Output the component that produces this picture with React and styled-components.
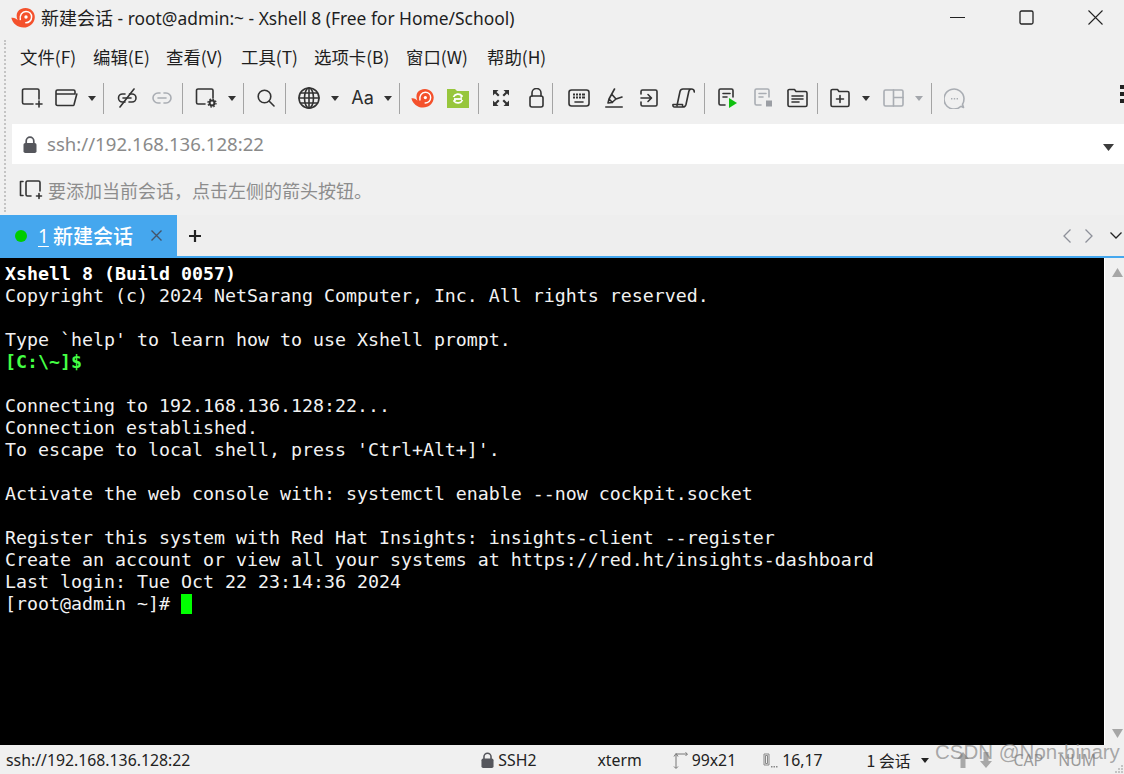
import React from "react";
import styled, { createGlobalStyle } from "styled-components";

const UI = `"Noto Sans", "Noto Sans CJK SC", sans-serif`;
const CJK = `"Noto Sans CJK SC", "Noto Sans", sans-serif`;

const Global = createGlobalStyle`
  html, body { margin: 0; padding: 0; background: #f0f0f0; overflow: hidden; }
  * { box-sizing: border-box; }
`;

const Window = styled.div`
  position: relative;
  width: 1124px;
  height: 774px;
  display: flex;
  flex-direction: column;
  background: #f0f0f0;
  font-family: ${UI};
  overflow: hidden;
`;

const TitleBar = styled.div`
  height: 40px;
  flex: none;
  display: flex;
  align-items: flex-start;
  padding: 8px 21px 0 11px;
`;
const TitleText = styled.div`
  margin-left: 6px;
  margin-top: -2px;
  font-size: 17.4px;
  line-height: 22px;
  color: #1e1e1e;
  white-space: nowrap;
  span { font-family: ${CJK}; font-size: 18px; }
`;
const WinButtons = styled.div`
  margin-left: auto;
  display: flex;
  gap: 54px;
  padding-top: 2px;
`;

const Bands = styled.div`
  flex: none;
  display: flex;
`;
const Grip = styled.div`
  width: 2px;
  margin: 0 6px 3px 4px;
  border-left: 2px dotted #c4c4c4;
`;
const BandStack = styled.div`
  flex: 1;
  min-width: 0;
  display: flex;
  flex-direction: column;
`;

const MenuBar = styled.div`
  height: 36px;
  display: flex;
  align-items: center;
  padding: 0 0 4px 8px;
`;
const MenuItem = styled.div`
  width: ${p => p.$w}px;
  flex: none;
  font-family: ${CJK};
  font-size: 17.4px;
  color: #1e1e1e;
  white-space: nowrap;
`;

const ToolBar = styled.div`
  height: 44px;
  display: flex;
  align-items: center;
`;
const Tool = styled.div`
  flex: none;
  width: ${p => p.$w}px;
  margin-left: ${p => p.$gap}px;
  display: flex;
  align-items: center;
  justify-content: center;
  svg { display: block; flex: none; }
`;
const Sep = styled.div`
  flex: none;
  width: 1px;
  height: 31px;
  margin-left: ${p => p.$gap}px;
  background: #a4a4a4;
`;
const AaLabel = styled.div`
  font-family: "Inter", sans-serif;
  font-size: 18px;
  line-height: 20px;
  color: #2c2c2c;
`;
const Dots = styled.div`
  margin-left: auto;
  width: 4px;
  margin-top: -8px;
  display: flex;
  flex-direction: column;
  gap: 3px;
  i { display: block; width: 4px; height: 4px; background: #222; }
`;

const AddressBar = styled.div`
  margin-top: 4px;
  height: 40px;
  background: #fff;
  display: flex;
  align-items: center;
  padding: 0 10px 0 11px;
`;
const AddressText = styled.div`
  margin: -2px 0 0 10px;
  font-size: 18.6px;
  color: #8a8a8a;
  white-space: nowrap;
`;
const AddressCaret = styled.div`
  margin-left: auto;
  margin-top: 2px;
`;

const LinkBar = styled.div`
  height: 51px;
  display: flex;
  align-items: center;
  padding-left: 7px;
`;
const LinkText = styled.div`
  margin-left: 5px;
  font-family: ${CJK};
  font-size: 18px;
  color: #8d8d8d;
  white-space: nowrap;
`;

const TabBar = styled.div`
  flex: none;
  height: 43px;
  display: flex;
  background: #eeeeee;
  border-bottom: 2px solid #45a7ee;
`;
const Tab = styled.div`
  width: 177px;
  background: #45a7ee;
  display: flex;
  align-items: center;
  padding-left: 15px;
  color: #fff;
`;
const Led = styled.div`
  width: 12px;
  height: 12px;
  border-radius: 50%;
  background: #00cc00;
`;
const TabNum = styled.span`
  margin-left: 11px;
  width: 10px;
  font-size: 19px;
  line-height: 24px;
  text-decoration: underline;
  text-underline-offset: 3px;
`;
const TabName = styled.span`
  margin-left: 5px;
  font-family: ${CJK};
  font-size: 20px;
  font-weight: 500;
  line-height: 24px;
  white-space: nowrap;
`;
const TabClose = styled.div`
  margin-left: 18px;
  display: flex;
`;
const TabAdd = styled.div`
  margin-left: 12px;
  align-self: center;
  display: flex;
`;
const TabNav = styled.div`
  margin-left: auto;
  align-self: center;
  display: flex;
  align-items: center;
  padding-right: 2px;
  gap: 14px;
`;
const TabMenu = styled.div`
  margin-left: 3px;
  display: flex;
`;

const Middle = styled.div`
  flex: 1;
  min-height: 0;
  display: flex;
`;
const Terminal = styled.pre`
  flex: 1;
  margin: 0;
  padding: 5px 0 0 5px;
  background: #000;
  color: #f2f2f2;
  font-family: "DejaVu Sans Mono", monospace;
  font-size: 18.27px;
  line-height: 22px;
  overflow: hidden;
`;
const Bold = styled.b`
  font-weight: 700;
  color: ${p => p.$c || "#fff"};
`;
const Cursor = styled.span`
  display: inline-block;
  width: 11px;
  height: 20px;
  background: #00ff00;
  vertical-align: -4px;
`;
const ScrollBar = styled.div`
  flex: none;
  width: 20px;
  background: #f0f0f0;
  border-left: 1px solid #fff;
  display: flex;
  flex-direction: column;
  justify-content: space-between;
  align-items: center;
  padding: 10px 0 7px 5px;
`;

const StatusBar = styled.div`
  flex: none;
  height: 29px;
  display: flex;
  align-items: center;
  padding: 1px 0 0 6px;
  font-size: 15.8px;
  color: #222;
  white-space: nowrap;
`;
const StatusCell = styled.div`
  display: flex;
  align-items: center;
  flex: none;
  margin-left: ${p => p.$gap || 0}px;
  gap: ${p => p.$inner || 0}px;
  color: ${p => p.$c || "#222"};
  font-family: ${p => (p.$cjk ? CJK : UI)};
`;
const Watermark = styled.div`
  position: absolute;
  left: 935px;
  top: 740px;
  font-family: "Liberation Sans", sans-serif;
  font-size: 20.5px;
  color: rgba(120, 120, 120, 0.62);
  white-space: nowrap;
  pointer-events: none;
`;
const Resize = styled.div`
  position: absolute;
  right: 0;
  bottom: 0;
  line-height: 0;
`;

const S = { fill: "none", stroke: "#333", strokeWidth: 1.6, strokeLinecap: "round", strokeLinejoin: "round" };
const G = { ...S, stroke: "#a9adb3" };

const Caret = ({ c = "#333", w = 8, h = 5 }) => (
  <svg width={w} height={h} viewBox="0 0 8 5"><path d="M0 0h8L4 5z" fill={c} /></svg>
);

const SnailLogo = ({ w = 24, h = 20 }) => (
  <svg width={w} height={h} viewBox="0 0 24 20">
    <path d="M0.300 9.800C3 9.300 5.300 10.300 6.600 12.300 5.300 9 5.300 6 6.700 3.800 8.400 1.200 11.400 0 14.600 0 19.800 0 23.800 4 23.800 9 23.800 15 18.600 19.600 12.600 19.600 6.600 19.600 1.600 15.600 0.300 9.800z" fill="#f4512c" />
    <path d="M9.300 11.500C8.500 7.200 11 3.400 15 3.400c3.400 0 5.600 2.600 5.600 5.600 0 3.300-2.600 5.800-5.800 5.800" fill="none" stroke="#fff" strokeWidth="1.500" strokeLinecap="round" />
    <circle cx="15" cy="9" r="1.700" fill="#fff" />
  </svg>
);

const NewIcon = () => (
  <svg width="22" height="20" viewBox="0 0 22 20">
    <path {...S} d="M12 16H3a1.500 1.500 0 0 1-1.500-1.500v-12A1.500 1.500 0 0 1 3 1h13.500A1.500 1.500 0 0 1 18 2.500V11" />
    <path {...S} d="M18 13v6M15 16h6" />
  </svg>
);
const OpenIcon = () => (
  <svg width="23" height="18" viewBox="0 0 23 18">
    <path {...S} d="M1 15.500V2.500A1.500 1.500 0 0 1 2.500 1h16A1.500 1.500 0 0 1 20 2.500V5H1M21.800 5 19 15.800a1 1 0 0 1-1 .7H2.500A1.500 1.500 0 0 1 1 15" />
  </svg>
);
const UnlinkIcon = () => (
  <svg width="21" height="20" viewBox="0 0 21 20">
    <path {...S} d="M8 6H5.500a4 4 0 0 0 0 8H8M12.500 6H15a4 4 0 0 1 0 8h-3M6 10h8" />
    <path {...S} d="M17 1 3 19" />
  </svg>
);
const LinkIcon = () => (
  <svg width="20" height="12" viewBox="0 0 20 12">
    <path {...G} d="M8 1H6a5 5 0 0 0 0 10h2M12 1h2a5 5 0 0 1 0 10h-2M6 6h8" />
  </svg>
);
const ConfigIcon = () => (
  <svg width="22" height="20" viewBox="0 0 22 20">
    <path {...S} d="M10 16H3a1.500 1.500 0 0 1-1.500-1.500v-12A1.500 1.500 0 0 1 3 1h13.500A1.500 1.500 0 0 1 18 2.500V10" />
    <circle cx="17" cy="15" r="2.400" fill="none" stroke="#333" strokeWidth="2" />
    <circle cx="17" cy="15" r="4" fill="none" stroke="#333" strokeWidth="1.300" strokeDasharray="1.600 1.540" />
  </svg>
);
const SearchIcon = () => (
  <svg width="18" height="18" viewBox="0 0 18 18">
    <circle {...S} cx="7.500" cy="7.500" r="6.300" />
    <path {...S} d="M12.300 12.300 17 17" />
  </svg>
);
const GlobeIcon = () => (
  <svg width="22" height="22" viewBox="0 0 22 22">
    <circle {...S} cx="11" cy="11" r="10" />
    <ellipse {...S} cx="11" cy="11" rx="4.500" ry="10" />
    <path {...S} d="M1 11h20M2.500 6h17M2.500 16h17M11 1v20" />
  </svg>
);
const FolderSync = () => (
  <svg width="22" height="20" viewBox="0 0 22 20">
    <path d="M0 1h8l2 2h12v17H0z" fill="#97c63c" />
    <path d="M6.500 9A5 5 0 0 1 15 8l-1.500 1.500M15.500 12A5 5 0 0 1 7 13l1.500-1.500" fill="none" stroke="#fff" strokeWidth="1.800" />
    <path d="M7 11h8" stroke="#fff" strokeWidth="1.800" />
  </svg>
);
const FullIcon = () => (
  <svg width="18" height="18" viewBox="0 0 18 18" fill="#333">
    <path d="M1 1h5.500L4.500 3l3 3L6 7.500l-3-3L1 6.500zM17 1h-5.500l2 2-3 3L12 7.500l3-3 2 2zM1 17h5.500l-2-2 3-3L6 10.500l-3 3-2-2zM17 17h-5.500l2-2-3-3 1.500-1.500 3 3 2-2z" />
  </svg>
);
const LockOpen = () => (
  <svg width="15" height="20" viewBox="0 0 15 20">
    <path {...S} d="M3 8V5a4.500 4.500 0 0 1 9 0v3" />
    <rect {...S} x="1" y="8" width="13" height="11" rx="2" />
  </svg>
);
const KeyboardIcon = () => (
  <svg width="22" height="18" viewBox="0 0 22 18">
    <rect {...S} x="1" y="1" width="20" height="16" rx="2.500" />
    <path d="M5 4.500h2v2H5zM8 4.500h2v2H8zM11 4.500h2v2h-2zM14 4.500h3v2h-3zM5 7.500h2v2H5zM8 7.500h2v2H8zM11 7.500h2v2h-2zM14 7.500h3v2h-3z" fill="#333" />
    <path {...S} d="M7 13h8" />
  </svg>
);
const PenIcon = () => (
  <svg width="18" height="20" viewBox="0 0 18 20">
    <path {...S} d="M9.500 1 4 11l-1 4 4-.5L11 11l6-2M4 11l3.500 3.500M7 6.500l4 4.500" />
    <path {...S} d="M0.800 19H17.200" />
  </svg>
);
const ArrowBox = () => (
  <svg width="18" height="18" viewBox="0 0 18 18">
    <path {...S} d="M1 5V2.500A1.500 1.500 0 0 1 2.500 1h13A1.500 1.500 0 0 1 17 2.500v13a1.500 1.500 0 0 1-1.500 1.500h-13A1.500 1.500 0 0 1 1 15.500V13" />
    <path {...S} d="M1 9h10M8 5.500 11.500 9 8 12.500" />
  </svg>
);
const ScriptIcon = () => (
  <svg width="23" height="20" viewBox="0 0 23 20">
    <path {...S} d="M5 17.500 8 3.500C8.400 1.800 9.300 1 11 1h8.500c1.700 0 2.800 1.200 2.800 3M19.500 1C18 1 17.200 2 16.800 3.500L14 16.500C13.600 18 12.600 19 11 19H2.500C1.300 19 .7 18 1 16.500h9.500c0 1.200.200 2.500 1 2.500" />
  </svg>
);
const RunIcon = () => (
  <svg width="19" height="20" viewBox="0 0 19 20">
    <path {...S} d="M7 17H2.500A1.500 1.500 0 0 1 1 15.500v-13A1.500 1.500 0 0 1 2.500 1h11A1.500 1.500 0 0 1 15 2.500V9" />
    <path {...S} d="M5 5.500h7M5 9h4" />
    <path d="M11 10l8 5-8 5z" fill="#0fc00f" />
  </svg>
);
const StopIcon = () => (
  <svg width="18" height="20" viewBox="0 0 18 20">
    <path {...G} d="M7 17H2.500A1.500 1.500 0 0 1 1 15.500v-13A1.500 1.500 0 0 1 2.500 1h11A1.500 1.500 0 0 1 15 2.500V9" />
    <path {...G} d="M5 5.500h7M5 9h4" />
    <path d="M12 12.500h6v6h-6z" fill="#9b9ea4" />
  </svg>
);
const ListIcon = () => (
  <svg width="21" height="20" viewBox="0 0 21 20">
    <path {...S} d="M1 3.500V17a1.500 1.500 0 0 0 1.500 1.500h16A1.500 1.500 0 0 0 20 17V5a1.500 1.500 0 0 0-1.500-1.500H9L7.500 1.500h-5A1.500 1.500 0 0 0 1 3.500z" />
    <path {...S} d="M5 8h11M5 11h11M5 14h7" />
  </svg>
);
const AddFolder = () => (
  <svg width="20" height="20" viewBox="0 0 20 20">
    <path {...S} d="M1 3V17a1.500 1.500 0 0 0 1.500 1.500h15A1.500 1.500 0 0 0 19 17V5a1.500 1.500 0 0 0-1.500-1.500H9L7.500 1.500h-5A1.500 1.500 0 0 0 1 3z" />
    <path {...S} d="M10 7.500v7M6.500 11h7" />
  </svg>
);
const LayoutIcon = () => (
  <svg width="21" height="18" viewBox="0 0 21 18">
    <rect {...G} x="1" y="1" width="19" height="16" rx="1.500" />
    <path {...G} d="M10.500 1v16M10.500 8.500H20" />
  </svg>
);
const ChatIcon = () => (
  <svg width="21" height="21" viewBox="0 0 21 21">
    <path {...G} d="M19.500 19.500 17 18.200A10 10 0 1 1 20 10.500c0 2.500-.6 4.500-1.500 5.800z" />
    <path d="M7 10h1.400v1.400H7zM9.800 10h1.400v1.400H9.800zM12.600 10H14v1.400h-1.400z" fill="#a9adb3" />
  </svg>
);
const LockSolid = ({ w = 14, h = 17, c = "#55565c" }) => (
  <svg width={w} height={h} viewBox="0 0 14 17">
    <path d="M3.200 8V5a3.800 3.800 0 0 1 7.600 0v3" fill="none" stroke={c} strokeWidth="1.700" />
    <rect x="0.500" y="7" width="13" height="10" rx="1.800" fill={c} />
  </svg>
);
const NewSmall = () => (
  <svg width="24" height="20" viewBox="0 0 24 20">
    <path {...S} d="M4 1.500H1.500v14H4M12 16H8.500A1.500 1.500 0 0 1 7 14.500v-12A1.500 1.500 0 0 1 8.500 1h11A1.500 1.500 0 0 1 21 2.500V11" />
    <path {...S} d="M20 13.500v5M17.500 16h5" />
  </svg>
);

const tools = [
  { gap: 9, w: 22, el: <NewIcon /> },
  { gap: 12, w: 23, el: <OpenIcon /> },
  { gap: 10, w: 8, el: <Caret /> },
  { sep: 7 },
  { gap: 13, w: 21, el: <UnlinkIcon /> },
  { gap: 14, w: 20, el: <LinkIcon /> },
  { sep: 10 },
  { gap: 12, w: 22, el: <ConfigIcon /> },
  { gap: 11, w: 8, el: <Caret /> },
  { sep: 7 },
  { gap: 13, w: 18, el: <SearchIcon /> },
  { sep: 10 },
  { gap: 12, w: 22, el: <GlobeIcon /> },
  { gap: 11, w: 8, el: <Caret /> },
  { gap: 13, w: 21, el: <AaLabel>Aa</AaLabel> },
  { gap: 11, w: 8, el: <Caret /> },
  { sep: 7 },
  { gap: 11, w: 23, el: <SnailLogo w={23} h={19} /> },
  { gap: 13, w: 22, el: <FolderSync /> },
  { sep: 9 },
  { gap: 13, w: 18, el: <FullIcon /> },
  { gap: 19, w: 15, el: <LockOpen /> },
  { sep: 8 },
  { gap: 15, w: 22, el: <KeyboardIcon /> },
  { gap: 15, w: 18, el: <PenIcon /> },
  { gap: 17, w: 18, el: <ArrowBox /> },
  { gap: 14, w: 23, el: <ScriptIcon /> },
  { sep: 9 },
  { gap: 13, w: 19, el: <RunIcon /> },
  { gap: 17, w: 18, el: <StopIcon /> },
  { gap: 15, w: 21, el: <ListIcon /> },
  { sep: 9 },
  { gap: 12, w: 20, el: <AddFolder /> },
  { gap: 12, w: 8, el: <Caret /> },
  { gap: 13, w: 21, el: <LayoutIcon /> },
  { gap: 11, w: 8, el: <Caret c="#a3a6ab" /> },
  { sep: 8 },
  { gap: 12, w: 21, el: <ChatIcon /> },
];

const menus = [
  ["文件(F)", 73], ["编辑(E)", 73], ["查看(V)", 75], ["工具(T)", 73],
  ["选项卡(B)", 92], ["窗口(W)", 81], ["帮助(H)", 70],
];

export default function App() {
  return (
    <Window>
      <Global />
      <TitleBar>
        <SnailLogo />
        <TitleText><span>新建会话</span> - root@admin:~ - Xshell 8 (Free for Home/School)</TitleText>
        <WinButtons>
          <svg width="15" height="15" viewBox="0 0 15 15"><path d="M0 7.500h15" stroke="#222" strokeWidth="1" /></svg>
          <svg width="15" height="15" viewBox="0 0 15 15"><rect x="1" y="1" width="13" height="13" rx="1.500" fill="none" stroke="#222" strokeWidth="1.300" /></svg>
          <svg width="15" height="15" viewBox="0 0 15 15"><path d="M.5.500l14 14M14.500.500l-14 14" stroke="#222" strokeWidth="1.100" /></svg>
        </WinButtons>
      </TitleBar>
      <Bands>
        <Grip />
        <BandStack>
          <MenuBar>
            {menus.map(([t, w]) => <MenuItem key={t} $w={w}>{t}</MenuItem>)}
          </MenuBar>
          <ToolBar>
            {tools.map((t, i) =>
              t.sep ? <Sep key={i} $gap={t.sep} /> : <Tool key={i} $gap={t.gap} $w={t.w}>{t.el}</Tool>
            )}
            <Dots><i /><i /><i /></Dots>
          </ToolBar>
          <AddressBar>
            <LockSolid />
            <AddressText>ssh://192.168.136.128:22</AddressText>
            <AddressCaret><Caret c="#3c3c3c" w={11} h={7} /></AddressCaret>
          </AddressBar>
          <LinkBar>
            <NewSmall />
            <LinkText>要添加当前会话，点击左侧的箭头按钮。</LinkText>
          </LinkBar>
        </BandStack>
      </Bands>
      <TabBar>
        <Tab>
          <Led />
          <TabNum>1</TabNum>
          <TabName>新建会话</TabName>
          <TabClose>
            <svg width="11" height="11" viewBox="0 0 11 11"><path d="M.5.500l10 10M10.500.500l-10 10" stroke="#44546a" strokeWidth="1.400" /></svg>
          </TabClose>
        </Tab>
        <TabAdd>
          <svg width="12" height="12" viewBox="0 0 12 12"><path d="M6 0v12M0 6h12" stroke="#222" strokeWidth="2.200" /></svg>
        </TabAdd>
        <TabNav>
          <svg width="8" height="14" viewBox="0 0 8 14"><path d="M7.500.500 1 7l6.500 6.500" fill="none" stroke="#8d9099" strokeWidth="1.300" /></svg>
          <svg width="8" height="14" viewBox="0 0 8 14"><path d="M.500.500 7 7 .500 13.500" fill="none" stroke="#8d9099" strokeWidth="1.300" /></svg>
          <TabMenu>
            <svg width="12" height="7" viewBox="0 0 12 7"><path d="M.500.500 6 6 11.500.500" fill="none" stroke="#222" strokeWidth="1.300" /></svg>
          </TabMenu>
        </TabNav>
      </TabBar>
      <Middle>
        <Terminal>
          <Bold>Xshell 8 (Build 0057)</Bold>{"\n"}
          {"Copyright (c) 2024 NetSarang Computer, Inc. All rights reserved.\n\nType `help' to learn how to use Xshell prompt.\n"}
          <Bold $c="#44ff44">{"[C:\\~]$"}</Bold>
          {"\n\nConnecting to 192.168.136.128:22...\nConnection established.\nTo escape to local shell, press 'Ctrl+Alt+]'.\n\nActivate the web console with: systemctl enable --now cockpit.socket\n\nRegister this system with Red Hat Insights: insights-client --register\nCreate an account or view all your systems at https://red.ht/insights-dashboard\nLast login: Tue Oct 22 23:14:36 2024\n[root@admin ~]# "}
          <Cursor />
        </Terminal>
        <ScrollBar>
          <svg width="11" height="9" viewBox="0 0 11 9"><path d="M5.500 0 11 9H0z" fill="#a6a6a6" /></svg>
          <svg width="11" height="9" viewBox="0 0 11 9"><path d="M0 0h11L5.500 9z" fill="#a6a6a6" /></svg>
        </ScrollBar>
      </Middle>
      <StatusBar>
        <StatusCell>ssh://192.168.136.128:22</StatusCell>
        <StatusCell $gap={291} $inner={4}><LockSolid w={13} h={16} />SSH2</StatusCell>
        <StatusCell $gap={61}>xterm</StatusCell>
        <StatusCell $gap={31} $inner={4}>
          <svg width="15" height="17" viewBox="0 0 15 17"><path d="M3 3v13M1 14.500 3 16.500 5 14.500M1 4.500 3 1.500 5 4.500M3 2h11M12.500.500 14.500 2 12.500 4" fill="none" stroke="#777" strokeWidth="1" /></svg>
          99x21
        </StatusCell>
        <StatusCell $gap={27} $inner={4}>
          <svg width="15" height="15" viewBox="0 0 15 15"><path d="M1 1h5v11H1zM2.500 2.500h2v8h-2z" fill="none" stroke="#888" strokeWidth="1" /><path d="M8 13h1.500v1.500H8zM10.500 13H12v1.500h-1.500zM13 13h1.500v1.500H13z" fill="#888" /></svg>
          16,17
        </StatusCell>
        <StatusCell $gap={44} $cjk>1 会话</StatusCell>
        <StatusCell $gap={11}><Caret c="#222" w={8} h={5} /></StatusCell>
        <StatusCell $gap={26} $inner={7}>
          <svg width="16" height="16" viewBox="0 0 16 16"><path d="M8 0 14 7H10.500V16h-5V7H2z" fill="#a8a8a8" /></svg>
          <svg width="16" height="16" viewBox="0 0 16 16"><path d="M8 16 14 9H10.500V0h-5V9H2z" fill="#a8a8a8" /></svg>
        </StatusCell>
        <StatusCell $gap={19} $c="#9a9a9a">CAP</StatusCell>
        <StatusCell $gap={15} $c="#9a9a9a">NUM</StatusCell>
      </StatusBar>
      <Watermark>CSDN @Non-binary</Watermark>
      <Resize>
        <svg width="10" height="10" viewBox="0 0 10 10"><path d="M7 1h2v2H7zM4 4h2v2H4zM7 4h2v2H7zM1 7h2v2H1zM4 7h2v2H4zM7 7h2v2H7z" fill="#c4c4c4" /></svg>
      </Resize>
    </Window>
  );
}
